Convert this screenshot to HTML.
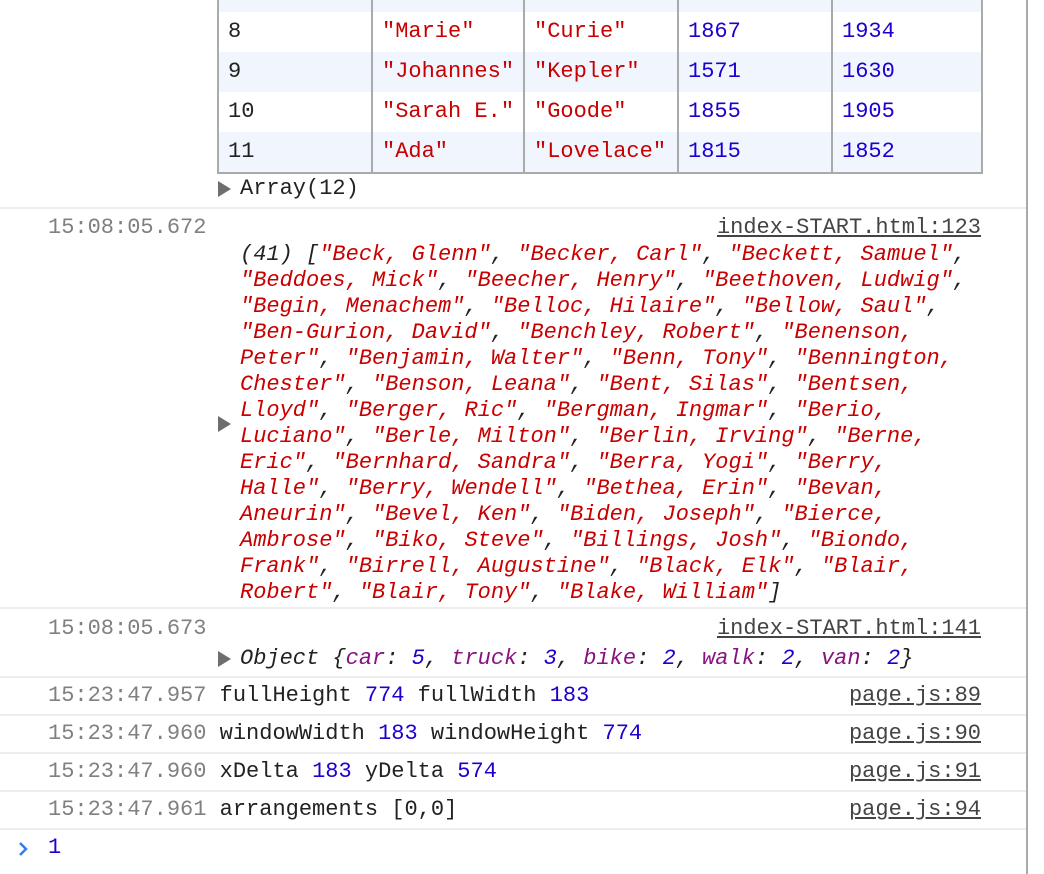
<!DOCTYPE html><html><head><style>
body{margin:0;width:1044px;height:874px;background:#fff;position:relative;overflow:hidden;font-family:"Liberation Mono",monospace;font-size:22px;color:#222}
.a{position:absolute;white-space:pre;line-height:26px}
.r{color:#c80000}.b{color:#1c00cf}.p{color:#881280}.g{color:#808080}
.sep{position:absolute;left:0;width:1026px;height:2px;background:#ededed}
.lk{position:absolute;right:63px;text-decoration:underline;color:#444;white-space:pre;line-height:26px}
table{position:absolute;left:217px;top:-30px;border-collapse:collapse;border:2px solid #aaa}
td{border-left:2px solid #aaa;border-right:2px solid #aaa;height:40px;padding:0 0 0 9px;line-height:40px;white-space:pre;vertical-align:middle}
tr.s td{background:#f0f5fe}
.tri{position:absolute;width:0;height:0;border-top:8px solid transparent;border-bottom:8px solid transparent;border-left:13px solid #6e6e6e}
</style></head><body>
<div style="position:absolute;left:1026px;top:0;width:2px;height:874px;background:#aaa"></div>
<table>
<tr class="s"><td style="width:143px;height:39px"></td><td style="width:141px"></td><td style="width:143px"></td><td style="width:143px"></td><td style="width:139px"></td></tr>
<tr><td>8</td><td class="r">"Marie"</td><td class="r">"Curie"</td><td class="b">1867</td><td class="b">1934</td></tr>
<tr class="s"><td>9</td><td class="r">"Johannes"</td><td class="r">"Kepler"</td><td class="b">1571</td><td class="b">1630</td></tr>
<tr><td>10</td><td class="r">"Sarah E."</td><td class="r">"Goode"</td><td class="b">1855</td><td class="b">1905</td></tr>
<tr class="s"><td>11</td><td class="r">"Ada"</td><td class="r">"Lovelace"</td><td class="b">1815</td><td class="b">1852</td></tr>
</table>
<div class="tri" style="left:218px;top:181px"></div>
<div class="a" style="left:240px;top:176px">Array(12)</div>
<div class="sep" style="top:207px"></div>
<div class="a g" style="left:48px;top:215px">15:08:05.672</div>
<div class="lk" style="top:215px">index-START.html:123</div>
<div class="tri" style="left:218px;top:416px"></div>
<div class="a" style="left:240px;top:242px;font-style:italic">(41) [<span class="r">"Beck, Glenn"</span>, <span class="r">"Becker, Carl"</span>, <span class="r">"Beckett, Samuel"</span>,
<span class="r">"Beddoes, Mick"</span>, <span class="r">"Beecher, Henry"</span>, <span class="r">"Beethoven, Ludwig"</span>,
<span class="r">"Begin, Menachem"</span>, <span class="r">"Belloc, Hilaire"</span>, <span class="r">"Bellow, Saul"</span>,
<span class="r">"Ben-Gurion, David"</span>, <span class="r">"Benchley, Robert"</span>, <span class="r">"Benenson,
Peter"</span>, <span class="r">"Benjamin, Walter"</span>, <span class="r">"Benn, Tony"</span>, <span class="r">"Bennington,
Chester"</span>, <span class="r">"Benson, Leana"</span>, <span class="r">"Bent, Silas"</span>, <span class="r">"Bentsen,
Lloyd"</span>, <span class="r">"Berger, Ric"</span>, <span class="r">"Bergman, Ingmar"</span>, <span class="r">"Berio,
Luciano"</span>, <span class="r">"Berle, Milton"</span>, <span class="r">"Berlin, Irving"</span>, <span class="r">"Berne,
Eric"</span>, <span class="r">"Bernhard, Sandra"</span>, <span class="r">"Berra, Yogi"</span>, <span class="r">"Berry,
Halle"</span>, <span class="r">"Berry, Wendell"</span>, <span class="r">"Bethea, Erin"</span>, <span class="r">"Bevan,
Aneurin"</span>, <span class="r">"Bevel, Ken"</span>, <span class="r">"Biden, Joseph"</span>, <span class="r">"Bierce,
Ambrose"</span>, <span class="r">"Biko, Steve"</span>, <span class="r">"Billings, Josh"</span>, <span class="r">"Biondo,
Frank"</span>, <span class="r">"Birrell, Augustine"</span>, <span class="r">"Black, Elk"</span>, <span class="r">"Blair,
Robert"</span>, <span class="r">"Blair, Tony"</span>, <span class="r">"Blake, William"</span>]</div>
<div class="sep" style="top:607px"></div>
<div class="a g" style="left:48px;top:616px">15:08:05.673</div>
<div class="lk" style="top:616px">index-START.html:141</div>
<div class="tri" style="left:218px;top:651px"></div>
<div class="a" style="left:240px;top:646px;font-style:italic">Object {<span class="p">car</span>: <span class="b">5</span>, <span class="p">truck</span>: <span class="b">3</span>, <span class="p">bike</span>: <span class="b">2</span>, <span class="p">walk</span>: <span class="b">2</span>, <span class="p">van</span>: <span class="b">2</span>}</div>
<div class="sep" style="top:676px"></div>
<div class="a" style="left:48px;top:683px"><span class="g">15:23:47.957</span> fullHeight <span class="b">774</span> fullWidth <span class="b">183</span></div>
<div class="lk" style="top:683px">page.js:89</div>
<div class="sep" style="top:714px"></div>
<div class="a" style="left:48px;top:721px"><span class="g">15:23:47.960</span> windowWidth <span class="b">183</span> windowHeight <span class="b">774</span></div>
<div class="lk" style="top:721px">page.js:90</div>
<div class="sep" style="top:752px"></div>
<div class="a" style="left:48px;top:759px"><span class="g">15:23:47.960</span> xDelta <span class="b">183</span> yDelta <span class="b">574</span></div>
<div class="lk" style="top:759px">page.js:91</div>
<div class="sep" style="top:790px"></div>
<div class="a" style="left:48px;top:797px"><span class="g">15:23:47.961</span> arrangements [0,0]</div>
<div class="lk" style="top:797px">page.js:94</div>
<div class="sep" style="top:828px"></div>
<svg style="position:absolute;left:17px;top:841px" width="12" height="16"><path d="M3 2 L9 8 L3 14" stroke="#367cf1" stroke-width="2.5" fill="none"/></svg>
<div class="a b" style="left:48px;top:835px">1</div>
</body></html>
